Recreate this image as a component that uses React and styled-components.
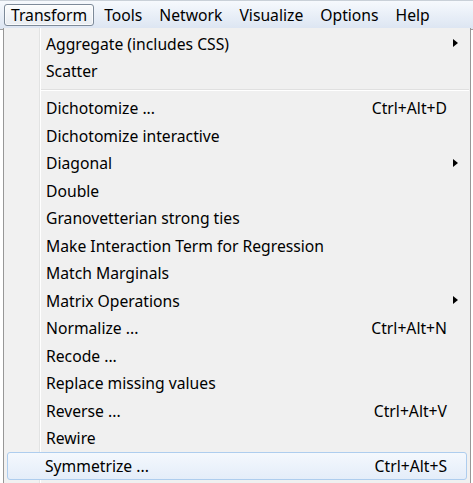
import React from 'react';
import styled, { createGlobalStyle } from 'styled-components';

const GlobalStyle = createGlobalStyle`
    html, body {
        margin: 0;
        padding: 0;
        background: #ffffff;
    }
    body {
        font-family: "Noto Sans", "Open Sans", "DejaVu Sans", sans-serif;
    }
`;

const Screen = styled.div`
    width: 473px;
    height: 483px;
    overflow: hidden;
    display: flex;
    flex-direction: column;
    background: #ffffff;
`;

const MenuBar = styled.div`
    height: 29px;
    flex: none;
    display: flex;
    align-items: center;
    padding-left: 4px;
    box-sizing: border-box;
    border-top: 1px solid #c9d0d8;
    background: linear-gradient(#f6f9fd, #dce5f2);
    font-size: 15.7px;
`;

const BarItem = styled.div`
    height: 22px;
    display: flex;
    align-items: center;
    padding: 0 6px;
    margin-right: 3px;
    box-sizing: border-box;
    border: 1px solid ${props => props.open ? '#7d8a99' : 'transparent'};
    border-radius: 3px;
    background: ${props => props.open ? 'linear-gradient(#fbfcfd, #e9edf2)' : 'transparent'};
    box-shadow: ${props => props.open ? 'inset 0 0 0 1px rgba(255,255,255,0.7)' : 'none'};
    color: #000;
`;

const Body = styled.div`
    flex: 1;
    display: flex;
    min-height: 0;
`;

const BehindStrip = styled.div`
    width: ${props => props.w}px;
    flex: none;
    background: #ffffff;
    border-top: 1px solid #a0a0a0;
`;

const MenuPanel = styled.div`
    flex: 1;
    box-sizing: border-box;
    border-left: 1px solid #979797;
    border-right: 1px solid #979797;
    margin-top: -1px;
    padding-top: 2px;
    background: linear-gradient(to right,
        #f1f1f1 0, #f1f1f1 35px,
        #e2e3e3 35px, #e2e3e3 36px,
        #ffffff 36px, #ffffff 37px,
        #f0f0f0 37px);
    font-size: 15.7px;
    color: #000;
`;

const Item = styled.div`
    height: 27.5px;
    display: flex;
    align-items: center;
    justify-content: space-between;
    box-sizing: border-box;
    padding: 0 19px 0 41px;
    margin: 0 3px 0 0;
    border: 1px solid ${props => props.hot ? '#aecdee' : 'transparent'};
    border-radius: 3px;
    background: ${props => props.hot ? 'linear-gradient(#f4f8fd, #e4edf9)' : 'transparent'};
    margin-left: ${props => props.hot ? '3px' : '0'};
    padding-left: ${props => props.hot ? '37px' : '41px'};
    position: relative;
    white-space: nowrap;
`;

const Shortcut = styled.span`
    color: #000;
`;

const Arrow = styled.span`
    position: absolute;
    right: 8px;
    top: 50%;
    margin-top: -4.5px;
    width: 0;
    height: 0;
    border-top: 4.5px solid transparent;
    border-bottom: 4.5px solid transparent;
    border-left: 5px solid #000;
`;

const Separator = styled.div`
    height: 9.5px;
    display: flex;
    flex-direction: column;
    justify-content: center;
    margin-left: 37px;
    margin-right: 1px;
    &::before {
        content: '';
        display: block;
        height: 1px;
        background: #e0e0e0;
    }
    &::after {
        content: '';
        display: block;
        height: 1px;
        background: #ffffff;
    }
`;

const barItems = ['Transform', 'Tools', 'Network', 'Visualize', 'Options', 'Help'];

const menu = [
    { label: 'Aggregate (includes CSS)', sub: true },
    { label: 'Scatter' },
    { sep: true },
    { label: 'Dichotomize ...', key: 'Ctrl+Alt+D' },
    { label: 'Dichotomize interactive' },
    { label: 'Diagonal', sub: true },
    { label: 'Double' },
    { label: 'Granovetterian strong ties' },
    { label: 'Make Interaction Term for Regression' },
    { label: 'Match Marginals' },
    { label: 'Matrix Operations', sub: true },
    { label: 'Normalize ...', key: 'Ctrl+Alt+N' },
    { label: 'Recode ...' },
    { label: 'Replace missing values' },
    { label: 'Reverse ...', key: 'Ctrl+Alt+V' },
    { label: 'Rewire' },
    { label: 'Symmetrize ...', key: 'Ctrl+Alt+S', hot: true },
];

export default function App() {
    return (
        <Screen>
            <GlobalStyle />
            <MenuBar>
                {barItems.map((name, i) => (
                    <BarItem key={name} open={i === 0}>{name}</BarItem>
                ))}
            </MenuBar>
            <Body>
                <BehindStrip w={3} />
                <MenuPanel>
                    {menu.map((m, i) => m.sep
                        ? <Separator key={i} />
                        : (
                            <Item key={i} hot={m.hot}>
                                <span>{m.label}</span>
                                {m.key && <Shortcut>{m.key}</Shortcut>}
                                {m.sub && <Arrow />}
                            </Item>
                        ))}
                </MenuPanel>
                <BehindStrip w={2} />
            </Body>
        </Screen>
    );
}
